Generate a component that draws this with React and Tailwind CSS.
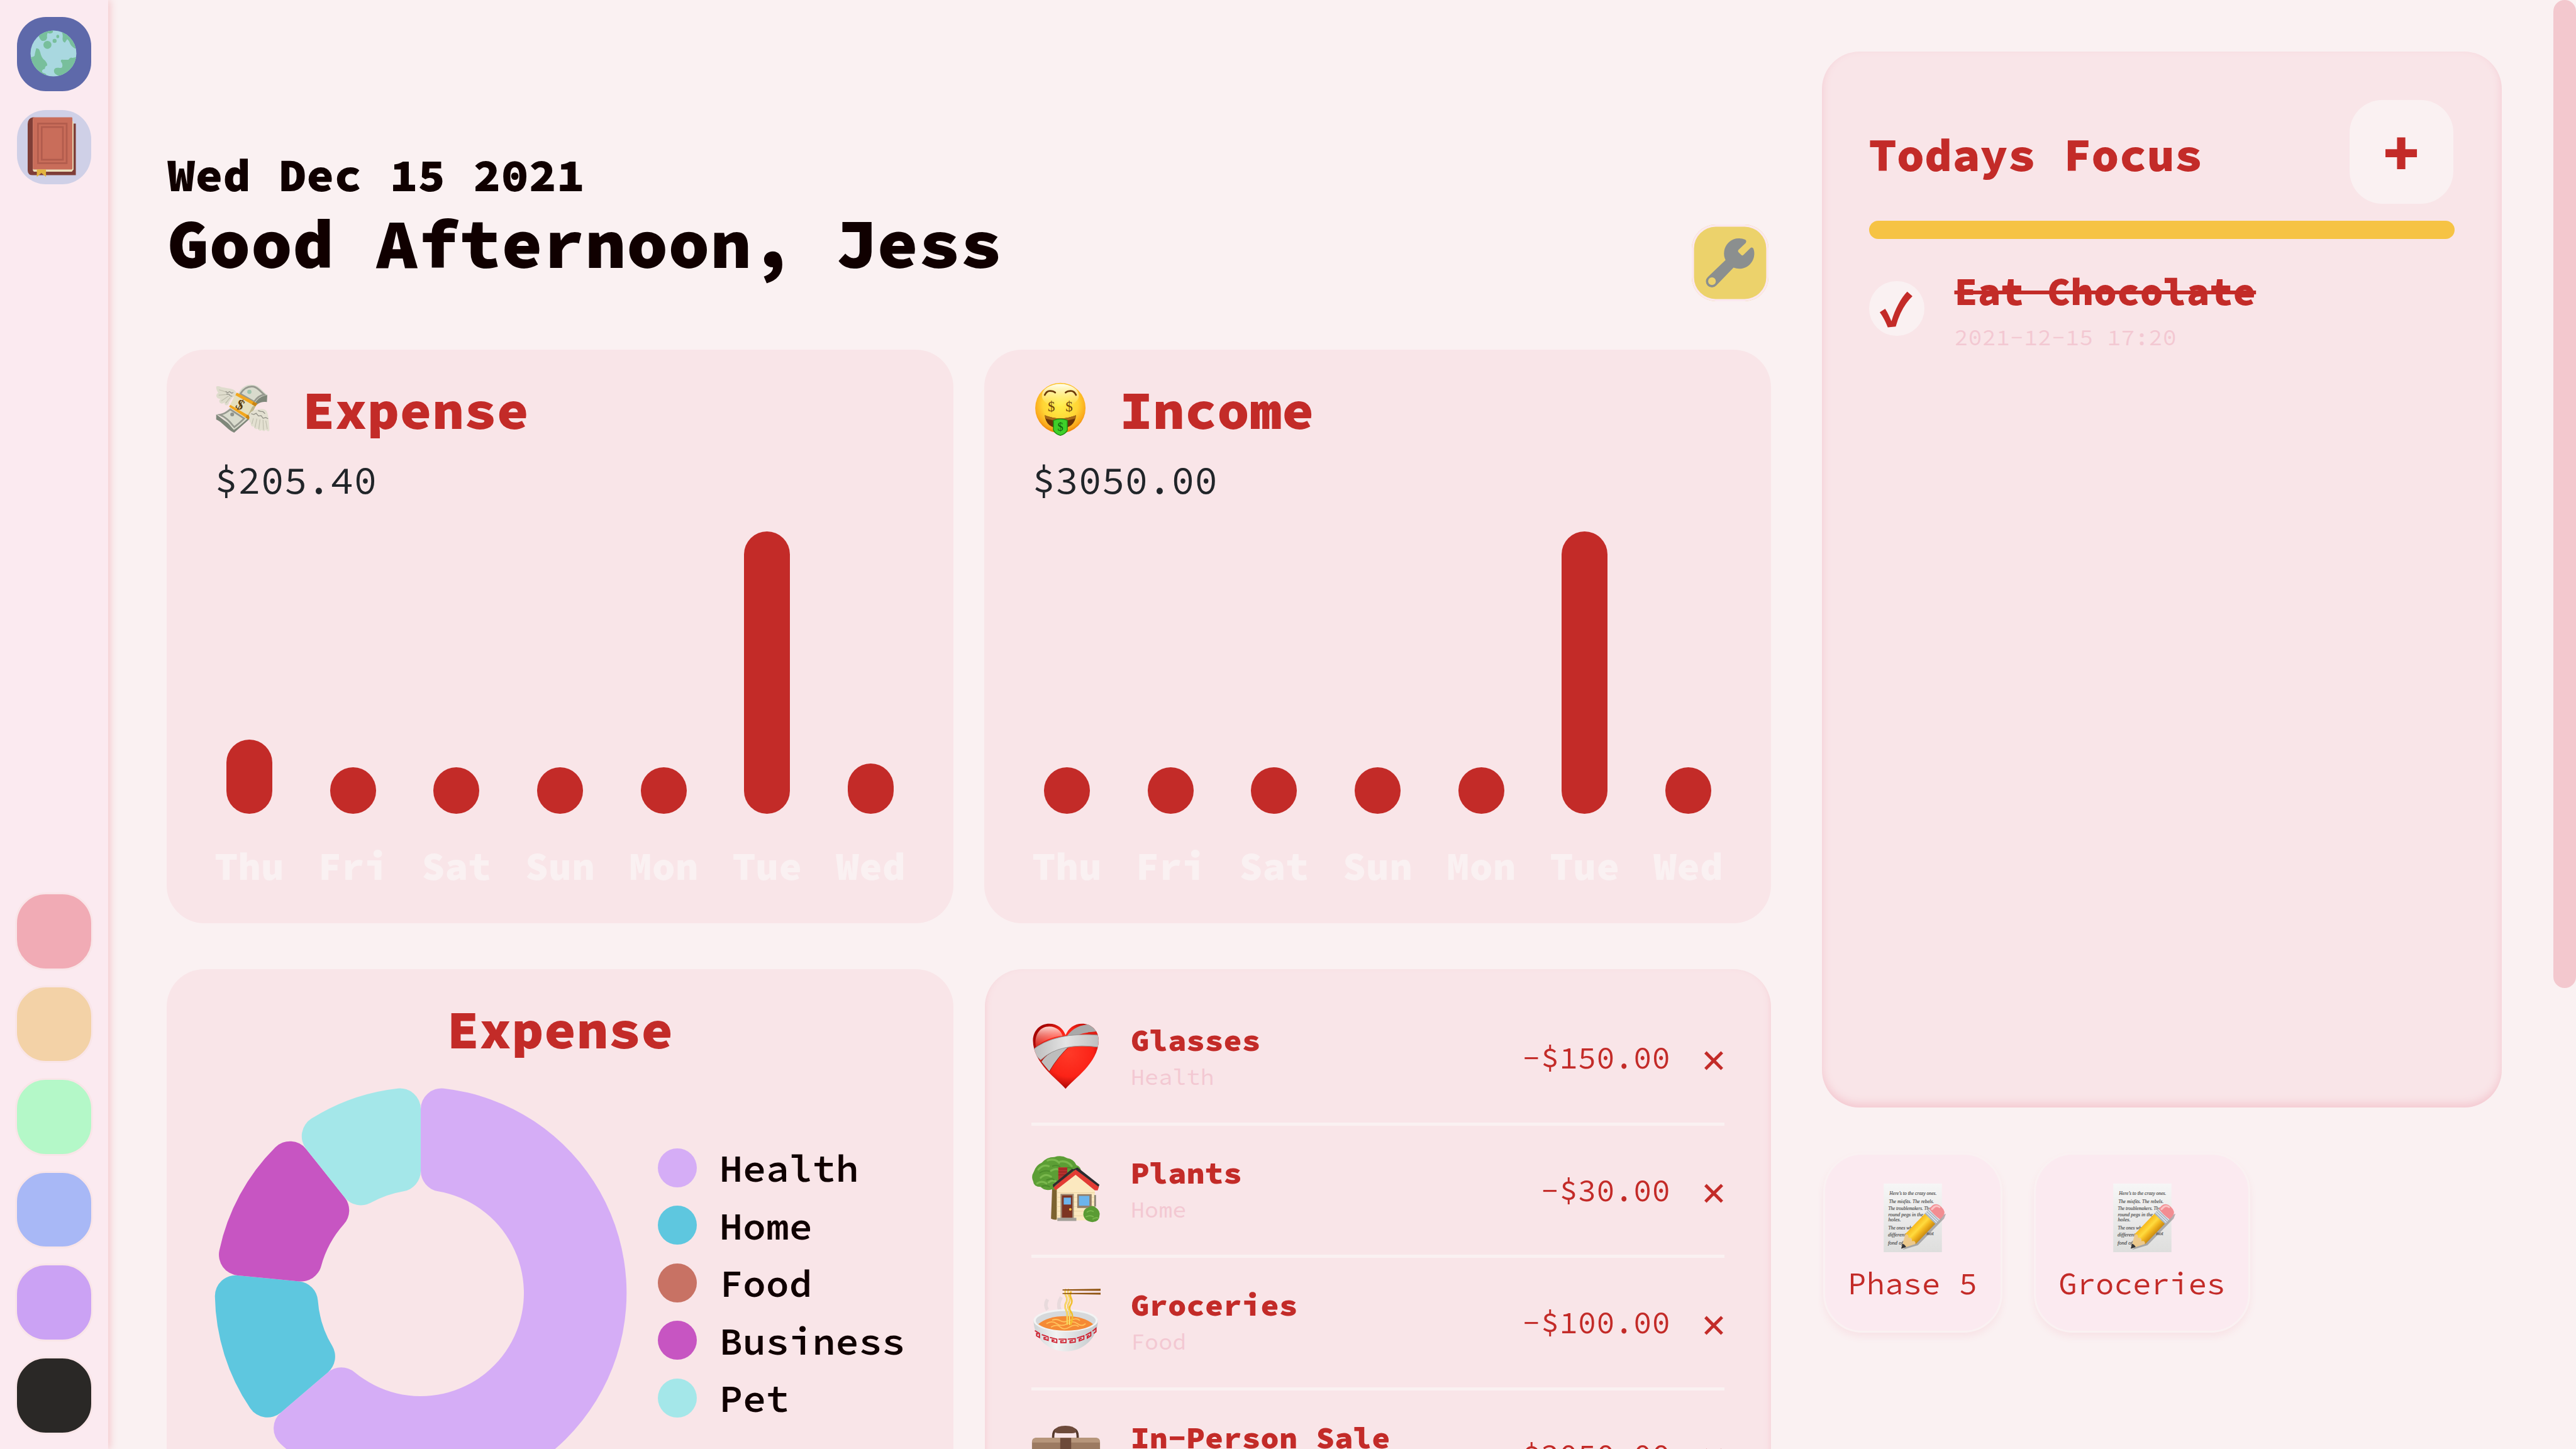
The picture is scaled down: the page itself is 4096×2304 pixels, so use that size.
const DAYS = ['Thu', 'Fri', 'Sat', 'Sun', 'Mon', 'Tue', 'Wed'];
const EXPENSE_BARS = [118, 74, 74, 74, 74, 449, 80];
const INCOME_BARS = [74, 74, 74, 74, 74, 449, 74];
const SWATCHES = ['bg-[#f1abb5]', 'bg-[#f3d2a7]', 'bg-[#b4f8c8]', 'bg-[#a8b8f6]', 'bg-[#cba2f4]', 'bg-[#2a2826]'];
const LEGEND = [
  ['Health', 'bg-[#d5adf6]'],
  ['Home', 'bg-[#5ec7df]'],
  ['Food', 'bg-[#c87264]'],
  ['Business', 'bg-[#c755c2]'],
  ['Pet', 'bg-[#a4e7e9]'],
];
const SLICES = [
  [0, 229.5, '#d5adf6'],
  [229.5, 275.5, '#5ec7df'],
  [275.5, 321.5, '#c755c2'],
  [321.5, 360, '#a4e7e9'],
];

function Globe() {
  return (
    <svg viewBox="0 0 136 136" className="h-full w-full">
      <clipPath id="globe"><circle cx="68" cy="68" r="40" /></clipPath>
      <circle cx="68" cy="68" r="40" fill="#a9d8e0" />
      <g clipPath="url(#globe)" fill="#78bf9c">
        <path d="M42 36q2 8 6 10q8 1 9-6q-1-5 1-8q6 3 9-1v-6l-16 1z" />
        <circle cx="57.500" cy="53" r="7" />
        <circle cx="70" cy="46" r="3.500" />
        <ellipse cx="75.500" cy="38.500" rx="2.500" ry="3" />
        <path d="M82 30q3 5 2 10q-1 8 4 9q2-3 4-6q3 2 5 8q3 6 10 9l2-22l-24-12z" />
        <path d="M26 73q5 3 9-1q1-6 3-13q5-1 7 7q2 10 8 14q5 6 4 9q-4 1-4 6q-3 0-5 3q0 4 3 4q4 1 6 5v8l-22-8l-12-24z" />
        <path d="M110 73q-8 4-11 2q-3 1-5 4h-9q-5-1-4 3q4 5 2 10q-2 2-6 1q-7-1-8 4q-1 6 6 9q7 3 13 1l20-16z" />
      </g>
    </svg>
  );
}

function Book() {
  return (
    <svg viewBox="-1 0 136 136" className="h-full w-full">
      <path d="M31 17q-9 2-9 12v80q0 9 9 9h75v-90h-8z" fill="#7f3e37" />
      <path d="M31 20l71 4v84l-3 4h-64q-4 0-4-4z" fill="#eadfbb" />
      <rect x="31" y="17" width="69" height="91" rx="1.500" fill="#c96d5a" />
      <g fill="none" stroke="#b25c4d" strokeWidth="3">
        <rect x="40" y="28" width="50" height="69" />
        <rect x="46.500" y="34" width="37" height="57" />
      </g>
      <path d="M38 108h16v13l-8-7l-8 7z" fill="#e2b440" />
    </svg>
  );
}

function Wrench() {
  return (
    <svg viewBox="36 30 402 402" className="h-full w-full">
      <path
        d="M316 109A79 79 0 0 0 213 216L120 305A31.500 31.500 0 1 0 165 349L255 256A79 79 0 0 0 359 156Q352 145 342 154L307 189Q301 195 295 189L280 174Q276 168 281 163L319 126Q325 115 316 109Z"
        fill="#8b8f8f"
      />
      <circle cx="142" cy="327" r="20" fill="#ecd26b" />
    </svg>
  );
}

function MoneyWings() {
  return (
    <svg viewBox="36 36 300 300" className="h-full w-full">
      <path d="M240 178C258 154 280 142 308 148L310 110C285 110 258 125 246 148Z" fill="#7f877a" />
      <path d="M45 211V238C75 250 95 284 138 307L218 236L205 214L137 280Z" fill="#7f877a" />
      <path d="M158 104C180 64 210 52 242 60C270 66 288 94 310 112C282 116 262 128 246 154Z" fill="#d9dbcd" />
      <path d="M170 105C188 76 212 64 240 68C262 74 276 94 294 109C272 113 256 124 242 146Z" fill="none" stroke="#96988f" strokeWidth="9" />
      <circle cx="217" cy="95" r="11" fill="#a0c4ae" />
      <path d="M45 213C75 212 95 200 118 176L207 234C185 256 162 274 137 292C115 270 90 228 45 213Z" fill="#d9dbcd" />
      <path d="M64 214C88 210 102 200 118 186L190 233C172 252 156 264 139 278C118 254 100 228 64 214Z" fill="none" stroke="#96988f" strokeWidth="9" />
      <circle cx="128" cy="212" r="10" fill="#8f938c" />
      <path d="M148 100L256 157Q250 170 240 188L213 237L113 172Z" fill="#e5dfbe" />
      <path d="M256 157L240 188L213 237L203 228L232 172Z" fill="#bdb58c" />
      <path d="M152 99L258 156L248 170L144 112Z" fill="#f2a61c" />
      <path d="M238 146L258 156L248 170L230 160Z" fill="#c98413" />
      <path d="M118 162L220 222L213 238L112 172Z" fill="#f2a61c" />
      <path d="M205 213L220 222L213 238L198 228Z" fill="#c98413" />
      <text x="170" y="187" fontSize="76" fontWeight="700" textAnchor="middle" fill="#5b3c0c" transform="rotate(30 170 162)" className="font-['Liberation_Serif',serif]">$</text>
      <path d="M45 68Q52 62 72 70L122 79Q146 84 148 100Q146 118 128 126L112 148Q108 166 96 165Q86 160 90 150Q74 160 64 152Q56 140 68 132Q50 130 46 118Q44 106 56 100Q44 84 45 68Z" fill="#dfdccd" />
      <path d="M60 84L104 98M58 112L104 108M72 142L110 116M94 154L118 124" stroke="#bfbdac" strokeWidth="4" fill="none" />
      <path d="M94 92l10 8l10-6l12 8l8-4M98 106l14 2l6 8l10 2" stroke="#8e8d84" strokeWidth="4" fill="none" />
      <path d="M218 208Q236 186 262 186Q292 178 306 194Q318 214 321 296Q312 304 302 290Q294 306 282 292Q270 304 260 286Q244 294 240 274Q222 278 224 256Q210 246 220 232Q212 220 218 208Z" fill="#e3e0d1" />
      <path d="M238 232L230 262M256 234L246 280M272 238L266 288M288 240L290 292M302 244L310 288" stroke="#c2c0b0" strokeWidth="4" fill="none" />
      <path d="M226 208l14 4l12-6l12 14l14-2l10 14l14-4l12 6M262 192l14 4l12 2l10 10" stroke="#8e8d84" strokeWidth="4" fill="none" />
    </svg>
  );
}

function MoneyFace() {
  return (
    <svg viewBox="0 0 100 100" className="h-full w-full">
      <defs>
        <radialGradient id="face" cx="0.500" cy="0.420" r="0.580">
          <stop offset="0" stopColor="#ffef4a" />
          <stop offset="0.600" stopColor="#ffd535" />
          <stop offset="0.880" stopColor="#fba91c" />
          <stop offset="1" stopColor="#ec8206" />
        </radialGradient>
        <linearGradient id="shine" x1="0" y1="0" x2="0" y2="1">
          <stop offset="0" stopColor="#fffff0" />
          <stop offset="1" stopColor="#fff9a0" stopOpacity="0" />
        </linearGradient>
      </defs>
      <circle cx="49" cy="47.500" r="43.500" fill="url(#face)" />
      <ellipse cx="49" cy="26" rx="32" ry="20" fill="url(#shine)" />
      <g fill="none" stroke="#6b3a08" strokeWidth="3" strokeLinecap="round">
        <path d="M22 25Q25 18 31 18Q37 18 40 21" />
        <path d="M58 21Q61 18 67 18Q73 18 76 25" />
      </g>
      <g fontSize="25" fill="#70440a" textAnchor="middle" className="font-['Liberation_Serif',serif]">
        <text x="33.500" y="53">$</text>
        <text x="64" y="53">$</text>
      </g>
      <path d="M22 60Q49 71 76 60Q74 82 49 83Q24 82 22 60Z" fill="#6a3308" />
      <path d="M22 60Q49 71 76 60Q76 64 74 66Q49 74 24 66Z" fill="#a86a18" />
      <path d="M37 69Q49 64 61 69V86Q57 93 49 95Q41 93 37 86Z" fill="#3fd02a" stroke="#1d8c12" strokeWidth="1.500" />
      <text x="49" y="87" fontSize="20" fill="#0f5f0b" textAnchor="middle" className="font-['Liberation_Serif',serif]">$</text>
    </svg>
  );
}

function Heart() {
  return (
    <svg viewBox="0 0 120 120" className="h-full w-full">
      <defs>
        <radialGradient id="heart" cx="0.550" cy="0.450" r="0.560">
          <stop offset="0" stopColor="#ff3a28" />
          <stop offset="0.650" stopColor="#fb2317" />
          <stop offset="1" stopColor="#a80604" />
        </radialGradient>
        <linearGradient id="gloss" x1="0" y1="0" x2="0" y2="1">
          <stop offset="0" stopColor="#ffd9d3" />
          <stop offset="1" stopColor="#ff5a4a" stopOpacity="0.300" />
        </linearGradient>
        <linearGradient id="wrapA" x1="0" y1="0" x2="1" y2="0">
          <stop offset="0" stopColor="#b9b9b9" />
          <stop offset="0.500" stopColor="#e4e4e4" />
          <stop offset="1" stopColor="#bdbdbd" />
        </linearGradient>
        <clipPath id="heartClip">
          <path d="M59.300 116C45 99 3 72 2.700 32C3 14 16 3 31 3C45 3 55 11 59.300 23C64 11 74 3 88 3C103 3 116.500 14 116.700 32C116 72 73 99 59.300 116Z" />
        </clipPath>
      </defs>
      <path d="M59.300 116C45 99 3 72 2.700 32C3 14 16 3 31 3C45 3 55 11 59.300 23C64 11 74 3 88 3C103 3 116.500 14 116.700 32C116 72 73 99 59.300 116Z" fill="url(#heart)" />
      <path d="M8 44C4 22 15 8 31 8C43 8 52 16 54 24C36 26 20 32 8 44Z" fill="url(#gloss)" />
      <g clipPath="url(#heartClip)">
        <path d="M62 24Q76 4 104 4L116 18Q90 16 74 26Z" fill="#a9a9a9" />
        <path d="M98 18L116 16V26L106 22Z" fill="#e01e14" />
        <path d="M17 69Q28 50 68 40Q46 60 31 86Z" fill="#bdbdbd" stroke="#8b1a14" strokeWidth="1" />
        <path d="M0 50Q40 16 120 23V44Q50 34 16 66Z" fill="url(#wrapA)" stroke="#8f8f8f" strokeWidth="1" />
      </g>
    </svg>
  );
}

function House() {
  return (
    <svg viewBox="0 0 120 120" className="h-full w-full">
      <path d="M36 58L34 111Q40 114 46 112V58Z" fill="#7d6330" />
      <path d="M4 30Q8 18 18 14Q26 4 40 4Q52 0 62 6Q74 8 78 18Q88 22 86 34L60 60Q46 64 36 60Q24 64 16 56Q4 56 3 46Q-1 38 4 30Z" fill="#5c9e35" />
      <path d="M12 26Q20 16 30 20M28 10Q40 6 48 14M50 12Q62 10 70 20M16 40Q24 32 34 38M10 50Q18 44 26 50M34 28Q44 22 52 28M30 48Q38 42 44 48" fill="none" stroke="#7ab84d" strokeWidth="3.500" strokeLinecap="round" />
      <path d="M14 32Q22 26 32 29M26 44Q36 40 40 44M36 20Q44 17 50 21M58 24Q66 20 72 26M18 55Q26 52 32 56" fill="none" stroke="#4a8a2a" strokeWidth="2" />
      <rect x="46.700" y="22" width="15.500" height="28" fill="#b5302d" />
      <path d="M46.700 25h15.500M46.700 30h15.500M46.700 35h15.500" stroke="#8a1e1e" strokeWidth="1" />
      <path d="M44 60L76.700 33L110 58V114H44Z" fill="#fbe8bf" />
      <path d="M44 66h66M44 74h66M44 82h66M44 90h66M44 98h66M44 106h66" stroke="#ead2a2" strokeWidth="1" />
      <path d="M72 26L80 22L118 52L115 60L78 30Z" fill="#2b2b30" />
      <path d="M76.700 26L117 56L115 62L110 62L76.700 35L42 62L38 57Z" fill="#e23b34" />
      <path d="M76.700 25L42 53L38 57L37 52L70 25Z" fill="#2f2d30" />
      <rect x="50.500" y="68" width="23" height="42" fill="#a08a73" />
      <rect x="53" y="70.500" width="18" height="39" fill="#7d3422" />
      <rect x="56" y="74.500" width="12.500" height="12" fill="#6cb4ec" />
      <circle cx="67.500" cy="95" r="2.200" fill="#f7c544" />
      <rect x="79.500" y="68.500" width="25" height="24" fill="#947e68" />
      <rect x="82.500" y="71.500" width="18" height="17" fill="#6cb4ec" />
      <rect x="109" y="70" width="3" height="20" fill="#8a8272" />
      <rect x="45" y="109.500" width="33" height="5.500" fill="#a39f98" />
      <path d="M90 104Q90 94 98 92Q106 86 112 92Q120 98 118 106Q118 116 106 117Q92 116 90 104Z" fill="#5a9b34" />
      <path d="M96 100q6-5 12-1M94 108q8-4 14 0M106 112q6-4 10-2" fill="none" stroke="#7ab84d" strokeWidth="2" />
    </svg>
  );
}

function Noodles() {
  return (
    <svg viewBox="0 0 120 120" className="h-full w-full">
      <defs>
        <linearGradient id="bowl" x1="0" y1="0" x2="1" y2="0">
          <stop offset="0" stopColor="#cfd3d5" />
          <stop offset="0.350" stopColor="#f2f3f3" />
          <stop offset="1" stopColor="#c2c7ca" />
        </linearGradient>
      </defs>
      <path d="M28 40q-6-8 0-18M50 42q-6-12 2-24" stroke="#dcd2d4" strokeWidth="6" fill="none" opacity="0.600" />
      <path d="M3.700 58C4 90 30 112 59.500 112S115 90 115.300 58Z" fill="url(#bowl)" />
      <path d="M6 76l8 5v7l-5-3v-4l3 1M18 83l11 4v6l-7-2v-3l4 1M32 88l12 3v6l-8-2v-3l4 1M47 91h13v6h-9v-3h5M63 91l13-1v6l-9 1v-3l5-1M79 89l12-4v6l-8 3v-3l4-2M94 84l9-5v6l-6 4v-3l3-2M106 77l6-5v6l-4 3" fill="none" stroke="#cf2030" strokeWidth="2" />
      <ellipse cx="59.500" cy="58.500" rx="55.800" ry="19.500" fill="#f3f4f4" />
      <ellipse cx="59.500" cy="59" rx="52" ry="17" fill="#d6d9db" />
      <path d="M12 65Q28 51 59.500 51T107 65Q92 76 59.500 76T12 65Z" fill="#f58a35" />
      <path d="M26 64q10-6 18 0t18 0t18 0t14 0M34 70q10-6 16 0t16 0t16-1M36 58q8-3 14 1t18-1t16 1" fill="none" stroke="#ffc25c" strokeWidth="2" />
      <path d="M60 4q-3 6 0 12t0 12t0 12t2 12v14M65 4q-3 6 0 12t0 12t0 12t1 12v14M69 8q-3 6 0 12t-1 12t1 12t-1 22" fill="none" stroke="#f1bf2e" strokeWidth="2.800" />
      <path d="M60 4q-3 6 0 12t0 12t0 12t2 12v14M65 4q-3 6 0 12t0 12t0 12t1 12v14" fill="none" stroke="#fff0a0" strokeWidth="1" />
      <path d="M54 4.500L120 3.500V7L54 6.500ZM54 10.800L120 10.300V13.500L54 12.600Z" fill="#8f5310" />
    </svg>
  );
}

function Briefcase() {
  return (
    <svg viewBox="0 0 120 120" className="h-full w-full">
      <path d="M38 34Q36 17 48 16H70Q82 17 80 34" fill="none" stroke="#55392c" strokeWidth="4" />
      <path d="M40 19Q44 11 59 11T78 19Q78 24 70 24H48Q40 24 40 19Z" fill="#6d4a3a" />
      <rect x="1" y="32" width="118" height="78" rx="7" fill="#9c7a61" />
      <path d="M1 40q0-8 7-8h104q7 0 7 8z" fill="#b7967b" />
      <rect x="50" y="32" width="19" height="60" fill="#6d4a39" />
    </svg>
  );
}

function Memo() {
  return (
    <svg viewBox="18 54 360 360" className="h-full w-full">
      <defs>
        <linearGradient id="paper" x1="0" y1="0" x2="0" y2="1">
          <stop offset="0" stopColor="#f6f6f6" />
          <stop offset="1" stopColor="#dededd" />
        </linearGradient>
        <linearGradient id="pencil" x1="0" y1="0" x2="1" y2="0">
          <stop offset="0" stopColor="#f6b81c" />
          <stop offset="0.400" stopColor="#ffdb3f" />
          <stop offset="0.650" stopColor="#f3b71e" />
          <stop offset="1" stopColor="#c98a12" />
        </linearGradient>
      </defs>
      <rect x="48" y="57" width="303" height="357" fill="url(#paper)" />
      <g fontSize="28" fontStyle="italic" fill="#4c4c4c" stroke="#4c4c4c" strokeWidth="0.600" className="font-['Liberation_Serif',serif]">
        <text x="78" y="117" textLength="246" lengthAdjust="spacingAndGlyphs">Here’s to the crazy ones.</text>
        <text x="75" y="158" textLength="235" lengthAdjust="spacingAndGlyphs">The misfits. The rebels.</text>
        <text x="72" y="196" textLength="222" lengthAdjust="spacingAndGlyphs">The troublemakers. The</text>
        <text x="72" y="226" textLength="182" lengthAdjust="spacingAndGlyphs">round pegs in the</text>
        <text x="72" y="255">holes.</text>
        <text x="72" y="297" textLength="135" lengthAdjust="spacingAndGlyphs">The ones who</text>
        <text x="70" y="331">differently</text>
        <text x="272" y="327">not</text>
        <text x="70" y="374">fond of</text>
      </g>
      <path d="M146 402L226 378L362 240L372 214L330 230L180 372Z" fill="#3a3a3a" opacity="0.350" />
      <g transform="translate(139 396) rotate(44) scale(1.15 1.02)">
        <path d="M0 0L-31 -66L-31 -76H31V-66Z" fill="#ecc98c" />
        <path d="M0 0L-11 -23Q0 -30 11 -23Z" fill="#33353a" />
        <path d="M-33 -66V-215H33V-66Q22 -84 11 -66Q0 -82 -11 -66Q-22 -84 -33 -66Z" fill="url(#pencil)" />
        <rect x="-34" y="-248" width="68" height="36" fill="#a9b6c2" />
        <path d="M-34 -222H34M-34 -232H34M-34 -242H34" stroke="#e6edf2" strokeWidth="4" />
        <path d="M-34 -246V-268Q-32 -296 0 -296T34 -268V-246Q0 -238 -34 -246Z" fill="#f28d92" />
        <path d="M-24 -254V-268Q-22 -286 -6 -288" fill="none" stroke="#fbc2c4" strokeWidth="9" strokeLinecap="round" />
      </g>
    </svg>
  );
}

function Sidebar() {
  return (
    <nav className="z-10 flex h-full w-[172px] shrink-0 flex-col items-center justify-between bg-[#fbeaf0] py-[23.500px] shadow-[4px_0_11px_#f5ccd0]">
      <div className="flex flex-col gap-6">
        <div className="size-[124px] overflow-hidden rounded-[49px] border-[3.600px] border-transparent bg-[#5e69aa] bg-clip-padding">
          <div className="-m-[3.600px] size-[124px]"><Globe /></div>
        </div>
        <div className="size-[124px] overflow-hidden rounded-[49px] border-[3.600px] border-transparent bg-[#cfd0e7] bg-clip-padding">
          <div className="-m-[3.600px] size-[124px]"><Book /></div>
        </div>
      </div>
      <div className="flex flex-col gap-6">
        {SWATCHES.map((c) => (
          <div key={c} className={`h-[123.600px] w-[124px] rounded-[49px] border-[3.600px] border-[#f9e5e8] ${c}`} />
        ))}
      </div>
    </nav>
  );
}

function BarCard({ icon, title, amount, bars }) {
  return (
    <section className="flex h-[912px] w-[1251px] flex-col rounded-[60px] bg-[#f9e5e8] px-[76px] pt-[49px]">
      <header className="flex h-[92px]">
        <div className="size-[92px]">{icon}</div>
        <h2 className="ml-[48px] mt-[4px] text-[85.700px] leading-none font-black text-[#c32b28]">{title}</h2>
      </header>
      <p className="mt-[36px] text-[61.500px] leading-none text-[#212529]">{amount}</p>
      <div className="mt-[50px] flex h-[449px] items-end justify-between">
        {bars.map((h, i) => (
          <div key={DAYS[i]} className="flex w-[111px] justify-center">
            <div className="w-[73px] rounded-[36.500px] bg-[#c32b28]" style={{ height: h }} />
          </div>
        ))}
      </div>
      <div className="mt-[53px] flex justify-between">
        {DAYS.map((d) => (
          <span key={d} className="w-[111px] text-center text-[61.500px] leading-none font-black text-[#faf1f2]">{d}</span>
        ))}
      </div>
    </section>
  );
}

/* Ring slice with all four corners rounded; angles run clockwise from the top. */
function slicePath(from, to) {
  const R = 327.3, r = 164, c = 33;
  const rad = Math.PI / 180;
  const p = (d, a) => `${328 + d * Math.sin(a)} ${328 - d * Math.cos(a)}`;
  const a0 = from * rad, a1 = to * rad;
  const oa = Math.asin(c / (R - c)), ia = Math.asin(c / (r + c));
  const od = Math.sqrt((R - c) ** 2 - c * c), id = Math.sqrt((r + c) ** 2 - c * c);
  const big = to - from > 180 ? 1 : 0;
  return [
    `M${p(id, a0)}L${p(od, a0)}`,
    `A${c} ${c} 0 0 1 ${p(R, a0 + oa)}`,
    `A${R} ${R} 0 ${big} 1 ${p(R, a1 - oa)}`,
    `A${c} ${c} 0 0 1 ${p(od, a1)}`,
    `L${p(id, a1)}`,
    `A${c} ${c} 0 0 1 ${p(r, a1 - ia)}`,
    `A${r} ${r} 0 ${big} 0 ${p(r, a0 + ia)}`,
    `A${c} ${c} 0 0 1 ${p(id, a0)}Z`,
  ].join('');
}

function DoughnutCard() {
  return (
    <section className="h-[912px] w-[1251px] rounded-[60px] bg-[#f9e5e8] px-[76px] pt-[53px]">
      <h2 className="text-center text-[85.700px] leading-none font-black text-[#c32b28]">Expense</h2>
      <div className="mt-[48px] flex">
        <svg viewBox="0 0 656 656" className="size-[656px]">
          {SLICES.map(([a, b, fill]) => (
            <path key={a} d={slicePath(a, b)} fill={fill} />
          ))}
        </svg>
        <ul className="ml-[49px] mt-[98px] flex flex-col gap-[29.500px]">
          {LEGEND.map(([name, dot]) => (
            <li key={name} className="flex h-[62px] items-center">
              <span className={`size-[62px] rounded-full ${dot}`} />
              <span className="ml-[36px] pt-[3px] text-[61.500px] leading-none font-semibold text-[#100000]">{name}</span>
            </li>
          ))}
        </ul>
      </div>
    </section>
  );
}

const TRANSACTIONS = [
  ['Glasses', 'Health', '−$150.00', Heart],
  ['Plants', 'Home', '−$30.00', House],
  ['Groceries', 'Food', '−$100.00', Noodles],
  ['In−Person Sale', 'Business', '$3050.00', Briefcase],
];

function Transactions() {
  return (
    <section className="h-[912px] w-[1250px] rounded-[60px] bg-[#f9e5e8] px-[74px] pt-[38px] shadow-[inset_0_-6px_12px_#f5ccd3]">
      {TRANSACTIONS.map(([name, kind, amount, Icon]) => (
        <div key={name} className="flex h-[210.500px] border-b-[5.500px] border-[#faf1f2] text-[49.100px] leading-none text-[#c32b28]">
          <div className="mt-[46px] size-[110px]"><Icon /></div>
          <div className="ml-[48px] mt-[50px]">
            <p className="font-black">{name}</p>
            <p className="mt-[16px] text-[36.800px] leading-none text-[#f3c8d2]">{kind}</p>
          </div>
          <p className="mt-[78px] ml-auto">{amount}</p>
          <p className="mt-[72px] mr-[2px] ml-[54px] flex w-[30px] justify-center text-[63px] leading-none">✕</p>
        </div>
      ))}
    </section>
  );
}

function Note({ title }) {
  return (
    <div className="flex h-[286px] flex-col items-center rounded-[62px] border-[3.600px] border-[#faf1f2] bg-[#fbeaf0] px-[36.500px] pt-[45px] shadow-[0_7px_11px_#f8e4e7]">
      <div className="size-[110px]"><Memo /></div>
      <p className="mt-[25px] text-[49.100px] leading-none text-[#c32b28]">{title}</p>
    </div>
  );
}

function Aside() {
  return (
    <aside className="mt-[82px] ml-[80.500px] w-[1081px]">
      <section className="h-[1679px] rounded-[60px] bg-[#f9e5e8] px-[75px] pt-[77px] text-[#c32b28] shadow-[inset_0_-6px_14px_#f4c8d0]">
        <header className="flex justify-between">
          <h2 className="mt-[50px] text-[73.700px] leading-none font-black">Todays Focus</h2>
          <div className="mr-[2px] flex size-[165px] items-center justify-center rounded-[52px] bg-[#faf1f2] text-[106px] leading-none font-black">+</div>
        </header>
        <div className="mt-[27px] h-[29px] rounded-full bg-[#f6c344]" />
        <div className="mt-[52px] flex">
          <div className="mt-[15px] flex h-[87px] w-[88px] items-center justify-center rounded-full bg-[#faf1f2] pr-[2px] text-[80px] leading-none font-black">✓</div>
          <div className="ml-[48px]">
            <p className="mt-px text-[61.500px] leading-none font-black line-through">Eat Chocolate</p>
            <p className="mt-[23px] text-[36.800px] leading-none text-[#f3c8d2]">2021−12−15 17:20</p>
          </div>
        </div>
      </section>
      <div className="mt-[72px] flex gap-[50px] pl-[2px]">
        <Note title="Phase 5" />
        <Note title="Groceries" />
      </div>
    </aside>
  );
}

export default function App() {
  return (
    <div className="flex h-[2304px] w-[4096px] overflow-hidden bg-[#faf1f2] font-['Source_Code_Pro','Noto_Sans_Mono','DejaVu_Sans_Mono',monospace]">
      <Sidebar />
      <main className="ml-[93px] w-[2551px] shrink-0 pt-[241px]">
        <header className="flex h-[238px] items-end justify-between pr-[4px]">
          <div className="self-start pl-px font-black text-[#100000]">
            <p className="text-[73.700px] leading-none">Wed Dec 15 2021</p>
            <h1 className="mt-[17px] text-[110.600px] leading-none">Good Afternoon, Jess</h1>
          </div>
          <div className="size-[122px] overflow-hidden rounded-[38px] bg-[#ecd26b] shadow-[inset_0_0_0_3.600px_#fbe8ef]">
            <Wrench />
          </div>
        </header>
        <div className="mt-[77px] flex justify-between">
          <BarCard icon={<MoneyWings />} title="Expense" amount="$205.40" bars={EXPENSE_BARS} />
          <BarCard icon={<MoneyFace />} title="Income" amount="$3050.00" bars={INCOME_BARS} />
        </div>
        <div className="mt-[73px] flex justify-between">
          <DoughnutCard />
          <Transactions />
        </div>
      </main>
      <Aside />
      <div className="ml-auto h-[1571px] w-[36px] rounded-full bg-[#f3c8ce]" />
    </div>
  );
}
